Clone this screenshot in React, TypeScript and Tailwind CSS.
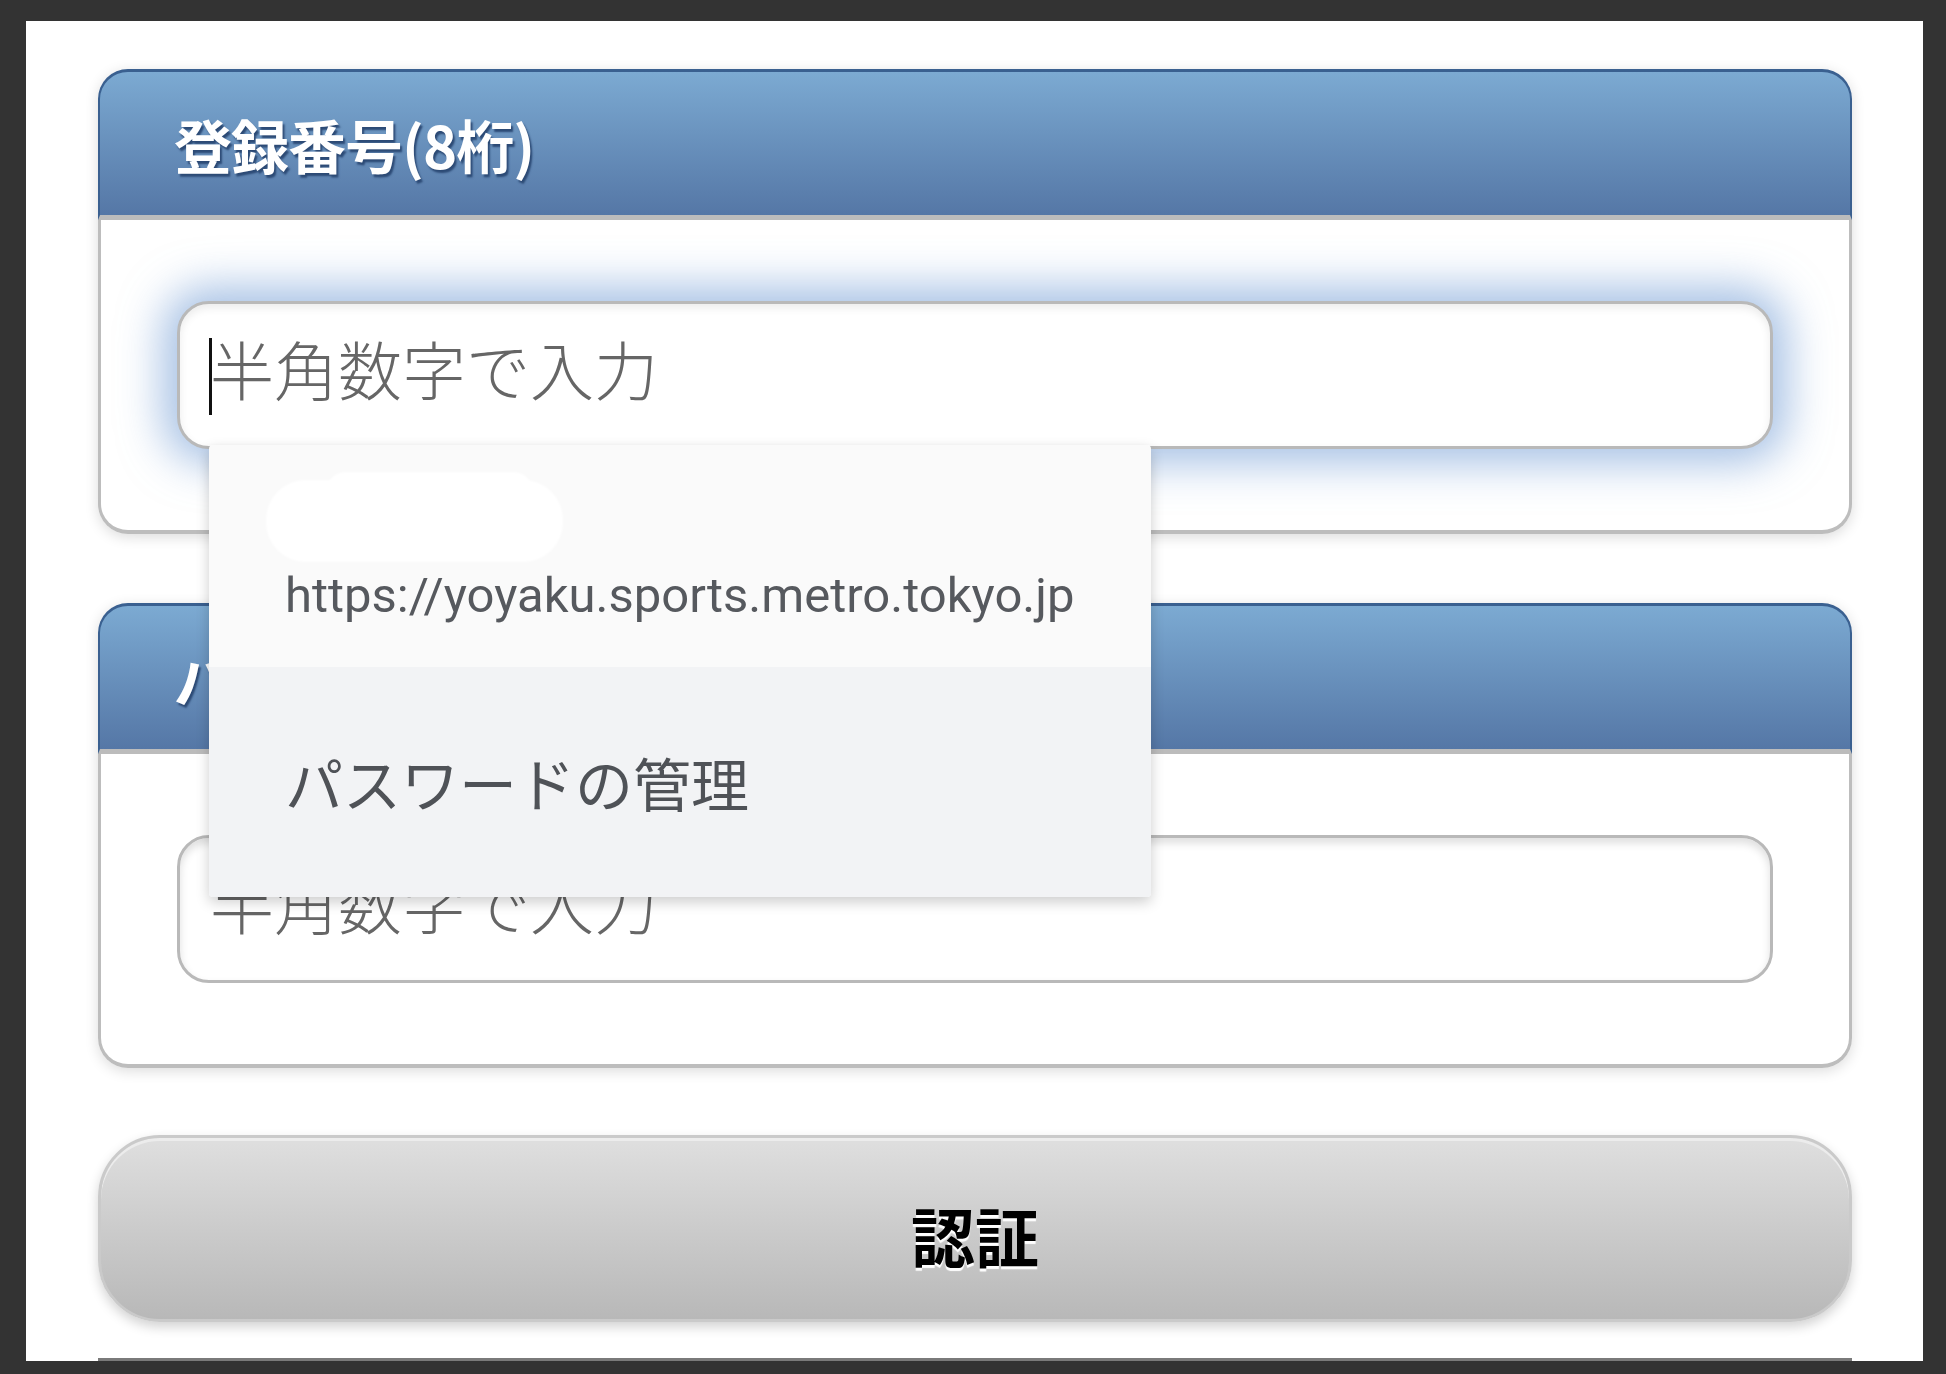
import type { ReactNode } from 'react';

const jp = "font-['Noto_Sans_CJK_JP','Noto_Sans',sans-serif]";
const roboto = "font-['Roboto','Noto_Sans_CJK_JP',sans-serif]";

interface SectionProps {
  title: string;
  children: ReactNode;
}

function Section({ title, children }: SectionProps) {
  return (
    <section className="w-[1754px] rounded-[30px] shadow-[0_3px_14px_rgba(0,0,0,0.14)]">
      <header className="h-[151px] flex items-center pl-[74px] rounded-t-[30px] border-x-2 border-t-[3px] border-[#3a6090] border-b-[5px] border-b-[#bcbcbc] bg-linear-to-b from-[#7caad2] to-[#5577a6]">
        <h2
          className={`${jp} text-[58px] leading-none font-bold text-white tracking-[-1px] [text-shadow:2px_3px_2px_#2c4a75]`}
        >
          {title}
        </h2>
      </header>
      <div className="bg-white rounded-b-[30px] border-x-[3px] border-b-4 border-[#bdbdbd] px-[76px] py-[81px]">
        {children}
      </div>
    </section>
  );
}

interface FieldProps {
  focused?: boolean;
  children?: ReactNode;
}

function Field({ focused, children }: FieldProps) {
  return (
    <div className="relative">
      <input
        type="text"
        inputMode="numeric"
        readOnly
        placeholder="半角数字で入力"
        className={`${jp} block w-full h-[148px] rounded-[32px] border-[3px] border-[#b9b9b9] bg-white pl-[30px] pb-[16px] text-[64px] font-light text-[#333] placeholder:text-[#666666] outline-none ${
          focused
            ? 'shadow-[0_0_44px_14px_rgba(105,150,210,0.6),inset_0_4px_8px_rgba(0,0,0,0.08)]'
            : 'shadow-[inset_0_5px_9px_rgba(0,0,0,0.13)]'
        }`}
      />
      {focused && <span className="absolute left-[32px] top-[37px] h-[77px] w-[3px] bg-[#111]" />}
      {children}
    </div>
  );
}

function Autofill() {
  return (
    <div className="absolute left-[32px] top-[144px] z-10 w-[942px] rounded-[4px] overflow-hidden shadow-[0_5px_14px_rgba(0,0,0,0.2)]">
      <div className="h-[222px] bg-[#fafafa] pt-[27px] pl-[57px]">
        {/* redacted user name */}
        <div className="relative h-[90px] w-[297px]">
          <div className="absolute inset-x-0 top-[8px] bottom-0 rounded-[40px] bg-white blur-[1px]" />
          <div className="absolute left-[60px] right-[30px] top-0 h-[40px] rounded-full bg-white blur-[1px]" />
        </div>
        <div className={`${roboto} mt-[9px] pl-[19px] text-[49px] leading-none text-[#56595e]`}>
          https://yoyaku.sports.metro.tokyo.jp
        </div>
      </div>
      <div
        className={`${jp} h-[230px] flex items-center pl-[76px] bg-[#f2f3f5] text-[58px] leading-none text-[#4f5257]`}
      >
        パスワードの管理
      </div>
    </div>
  );
}

export default function App() {
  return (
    <div className="w-[1946px] h-[1374px] bg-[#333333] pt-[21px] pl-[26px] overflow-hidden">
      <main className="w-[1897px] bg-white pl-[72px] pt-[48px] flex flex-col">
        <Section title="登録番号(8桁)">
          <Field focused>
            <Autofill />
          </Field>
        </Section>

        <div className="mt-[69px]">
          <Section title="パスワード">
            <Field />
          </Section>
        </div>

        <button
          type="button"
          className={`${jp} mt-[67px] w-[1754px] h-[187px] rounded-[62px] border-[3px] border-[#cacaca] bg-linear-to-b from-[#dfdfdf] to-[#b8b8b8] pt-[10px] text-[64px] leading-none font-bold text-black [text-shadow:0_3px_1px_#ffffff] shadow-[0_5px_12px_rgba(0,0,0,0.18),inset_0_3px_0_#ececec]`}
        >
          認証
        </button>

        <div className="mt-[36px] w-[1754px] h-[3px] bg-[#7a7a7a]" />
      </main>
    </div>
  );
}
